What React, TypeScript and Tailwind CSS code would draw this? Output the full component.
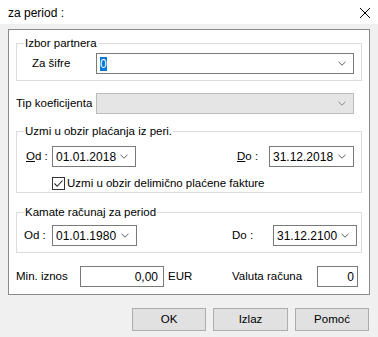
const Chevron = ({ color = '#606060' }: { color?: string }) => (
  <svg width="8" height="5" viewBox="0 0 8 5" className="shrink-0">
    <path d="M0.5 0.8 L4 4.2 L7.5 0.8" fill="none" stroke={color} strokeWidth="1" />
  </svg>
);

const Combo = ({ value, w, disabled = false }: { value: string; w: string; disabled?: boolean }) => (
  <div
    className={`${w} h-[21px] flex items-center justify-between pl-[3px] pr-[7px] border ${
      disabled ? 'bg-[#e5e5e5] border-[#bcbcbc]' : 'bg-white border-[#7a7a7a]'
    }`}
  >
    <span className="leading-none text-[12px]">{value}</span>
    <Chevron color={disabled ? '#888888' : '#606060'} />
  </div>
);

const Group = ({ title, className, children }: { title: string; className: string; children: React.ReactNode }) => (
  <div className={`relative ml-[7px] w-[346px] border border-[#dcdcdc] ${className}`}>
    <span className="absolute left-[7px] top-[-9px] bg-white px-[1px] leading-[16px]">{title}</span>
    {children}
  </div>
);

const App = () => {
  return (
    <div className="w-[378px] h-[337px] bg-[#f0f0f0] text-[11.5px] text-black font-['Liberation_Sans',Arial,sans-serif] overflow-hidden">
      {/* title bar */}
      <div className="h-[24px] bg-white flex items-center justify-between pl-[8px] pr-[7px]">
        <span className="text-[12px] mt-[2px]">za period :</span>
        <svg width="12" height="12" viewBox="0 0 12 12" className="mt-[2px]">
          <path d="M1 1 L11 11 M11 1 L1 11" stroke="#000" strokeWidth="1" />
        </svg>
      </div>

      <div className="pl-[8px] pt-[5px]">
        <div className="w-[362px] h-[266px] bg-white border border-[#8a8a8a] flex flex-col">
          <Group title="Izbor partnera" className="mt-[13px] pt-[9px] pb-[6px]">
            <div className="flex items-center">
              <span className="w-[79px] pl-[15px]">Za šifre</span>
              <div className="w-[258px] h-[21px] border border-[#7a7a7a] flex items-center justify-between pl-[3px] pr-[7px]">
                <span className="bg-[#0078d7] text-white text-[12px] leading-[14px]">0</span>
                <Chevron />
              </div>
            </div>
          </Group>

          <div className="flex items-center mt-[12px] ml-[7px]">
            <span className="w-[80px]">Tip koeficijenta</span>
            <Combo value="" w="w-[258px]" disabled />
          </div>

          <Group title="Uzmi u obzir plaćanja iz peri." className="mt-[17px] pt-[14px] pb-[2px]">
            <div className="flex items-center">
              <span className="w-[35px] pl-[9px]">
                <span className="underline">O</span>d :
              </span>
              <Combo value="01.01.2018" w="w-[84px]" />
              <span className="ml-[101px] w-[32px]">
                <span className="underline">D</span>o :
              </span>
              <Combo value="31.12.2018" w="w-[85px]" />
            </div>
            <div className="flex items-center h-[13px] mt-[10px] pl-[35px]">
              <div className="w-[13px] h-[13px] border border-[#333333] bg-white flex items-center justify-center">
                <svg width="11" height="11" viewBox="0 0 11 11">
                  <path d="M1.5 5.5 L4.2 8.3 L9.5 2.5" fill="none" stroke="#222" strokeWidth="1.1" />
                </svg>
              </div>
              <span className="ml-[2px]">Uzmi u obzir delimično plaćene fakture</span>
            </div>
          </Group>

          <Group title="Kamate računaj za period" className="mt-[19px] pt-[12px] pb-[6px]">
            <div className="flex items-center">
              <span className="w-[35px] pl-[7px]">Od :</span>
              <Combo value="01.01.1980" w="w-[85px]" />
              <span className="ml-[95px] w-[41px]">Do :</span>
              <Combo value="31.12.2100" w="w-[84px]" />
            </div>
          </Group>

          <div className="flex items-center mt-[13px] ml-[7px]">
            <span className="w-[64px]">Min. iznos</span>
            <div className="w-[84px] h-[21px] border border-[#7a7a7a] flex items-center justify-end pr-[5px] text-[12px]">0,00</div>
            <span className="ml-[4px] w-[64px]">EUR</span>
            <span className="w-[85px]">Valuta računa</span>
            <div className="w-[41px] h-[21px] border border-[#7a7a7a] flex items-center justify-end pr-[3px] text-[12px]">0</div>
          </div>
        </div>
      </div>

      <div className="flex justify-end gap-[7px] pr-[9px] mt-[13px]">
        <button className="w-[74px] h-[23px] bg-[#e1e1e1] border border-[#adadad]">OK</button>
        <button className="w-[75px] h-[23px] bg-[#e1e1e1] border border-[#adadad]">Izlaz</button>
        <button className="w-[74px] h-[23px] bg-[#e1e1e1] border border-[#adadad]">Pomoć</button>
      </div>
    </div>
  );
};

export default App;
